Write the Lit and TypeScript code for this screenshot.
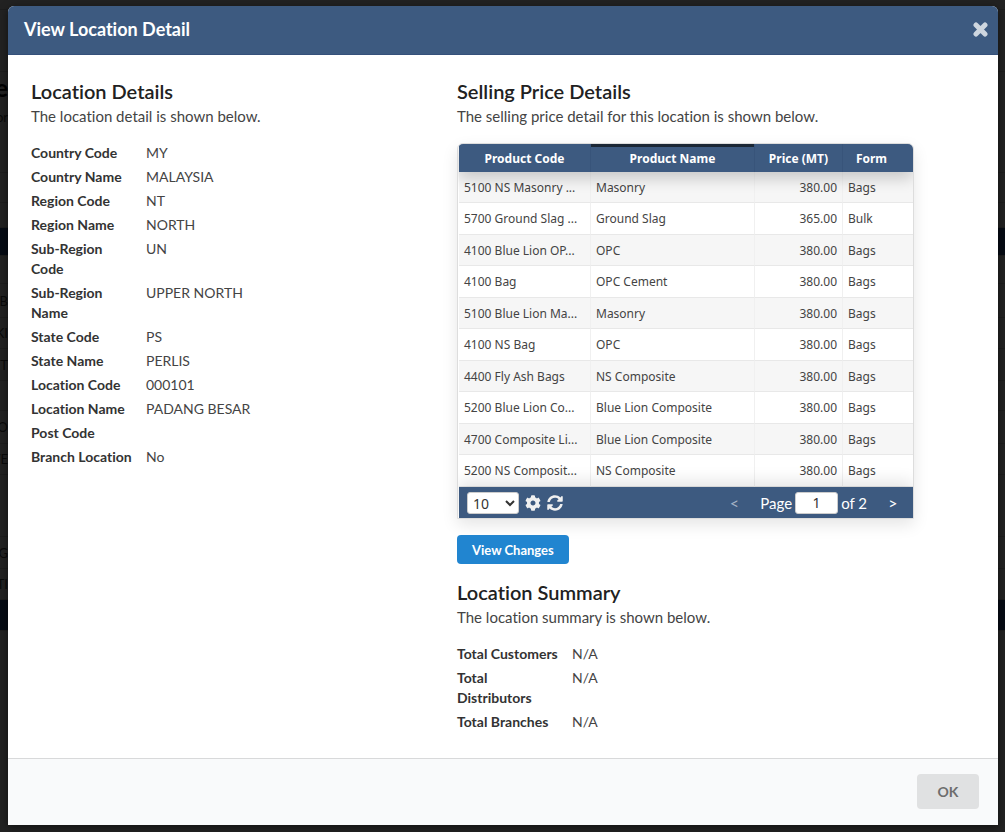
import { LitElement, html, css } from "lit";
import { customElement, state } from "lit/decorators.js";

type Pair = [label: string, value: string];
type Price = [code: string, name: string, price: string, form: string];
type BackdropRow = [kind: string, height: number, text: string];

const LOCATION: Pair[] = [
  ["Country Code", "MY"],
  ["Country Name", "MALAYSIA"],
  ["Region Code", "NT"],
  ["Region Name", "NORTH"],
  ["Sub-Region Code", "UN"],
  ["Sub-Region Name", "UPPER NORTH"],
  ["State Code", "PS"],
  ["State Name", "PERLIS"],
  ["Location Code", "000101"],
  ["Location Name", "PADANG BESAR"],
  ["Post Code", ""],
  ["Branch Location", "No"],
];

const SUMMARY: Pair[] = [
  ["Total Customers", "N/A"],
  ["Total Distributors", "N/A"],
  ["Total Branches", "N/A"],
];

const PRICES: Price[] = [
  ["5100 NS Masonry ...", "Masonry", "380.00", "Bags"],
  ["5700 Ground Slag ...", "Ground Slag", "365.00", "Bulk"],
  ["4100 Blue Lion OP...", "OPC", "380.00", "Bags"],
  ["4100 Bag", "OPC Cement", "380.00", "Bags"],
  ["5100 Blue Lion Ma...", "Masonry", "380.00", "Bags"],
  ["4100 NS Bag", "OPC", "380.00", "Bags"],
  ["4400 Fly Ash Bags", "NS Composite", "380.00", "Bags"],
  ["5200 Blue Lion Co...", "Blue Lion Composite", "380.00", "Bags"],
  ["4700 Composite Li...", "Blue Lion Composite", "380.00", "Bags"],
  ["5200 NS Composit...", "NS Composite", "380.00", "Bags"],
];

// Rows of the dimmed page that stays visible round the dialog.
const BACKDROP: BackdropRow[] = [
  ["plain", 10, ""],
  ["plain", 62, ""],
  ["title", 32, "e"],
  ["note", 26, "or"],
  ["plain", 43, ""],
  ["plain", 30, ""],
  ["plain", 25, ""],
  ["bar", 28, ""],
  ["plain", 28, ""],
  ["cell", 34, "B"],
  ["cell", 31, "KI"],
  ["cell", 32, "ET"],
  ["plain", 30, ""],
  ["cell", 33, "SO"],
  ["cell", 31, "YE"],
  ["plain", 62, ""],
  ["cell", 32, "G"],
  ["cell", 31, "TI"],
  ["bar", 31, ""],
];

@customElement("app-root")
export class AppRoot extends LitElement {
  static styles = css`
    :host {
      display: block;
      position: relative;
      min-height: 100vh;
      background: #222222;
      color: #212121;
      font-family: Lato, "Liberation Sans", sans-serif;
      font-size: 14px;
      font-variant-ligatures: none;
      overflow: hidden;
    }
    * {
      box-sizing: border-box;
    }
    .backdrop {
      position: absolute;
      inset: 0;
      overflow: hidden;
      font-size: 13px;
      color: #0a0a0a;
    }
    .band {
      display: flex;
      align-items: center;
      border-bottom: 1px solid #1d1d1d;
    }
    .band.title,
    .band.note {
      border-bottom-color: transparent;
    }
    .band.title {
      font-size: 24px;
      font-weight: 700;
      color: #000000;
    }
    .band.bar {
      background: #060b14;
    }
    .peek {
      display: flex;
      justify-content: flex-end;
      width: 8px;
    }
    .dialog {
      position: relative;
      display: flex;
      flex-direction: column;
      margin: 6px 7px 7px 8px;
      min-height: calc(100vh - 13px);
      background: #ffffff;
      border-radius: 6px 6px 0 0;
      box-shadow: 0 2px 8px rgba(0, 0, 0, 0.5);
    }
    .top {
      display: flex;
      align-items: center;
      justify-content: space-between;
      height: 49px;
      padding: 0 10px 2px 16px;
      background: #3d5a80;
      border-radius: 6px 6px 0 0;
      border-bottom: 1px solid #35507a;
      color: #ffffff;
    }
    .top h1 {
      margin: 0;
      font-size: 18px;
      font-weight: 700;
      line-height: 46px;
    }
    button {
      font-family: inherit;
      border: 0;
      cursor: pointer;
    }
    .icon {
      display: flex;
      padding: 0;
      background: none;
      color: #f0f0f0;
    }
    .icon.close {
      color: #ced6df;
    }
    .body {
      flex: 1;
      display: grid;
      grid-template-columns: 426fr 541fr;
      padding: 24px 0 24px 23px;
    }
    h2 {
      margin: 0;
      font-size: 20px;
      font-weight: 600;
      line-height: 25px;
    }
    .lead {
      margin: 0 0 15px;
      font-size: 15px;
      line-height: 24px;
      color: #444444;
    }
    .pairs {
      display: grid;
      grid-template-columns: 104px 1fr;
      gap: 4px 11px;
      margin: 0;
      line-height: 20px;
    }
    .pairs dt {
      font-weight: 700;
      color: #333333;
    }
    .pairs dd {
      margin: 0;
      color: #444444;
    }
    .grid {
      width: 457px;
      max-width: 100%;
      padding-left: 1px;
      border: 1px solid #dddddd;
      border-radius: 6px 6px 0 0;
      box-shadow: 0 6px 16px rgba(0, 0, 0, 0.1);
      overflow: hidden;
    }
    table {
      width: 100%;
      border-collapse: separate;
      border-spacing: 0;
      table-layout: fixed;
      font-family: "Noto Sans", "Open Sans", sans-serif;
      font-size: 12px;
      color: #444444;
    }
    .c-code {
      width: 132px;
    }
    .c-name {
      width: 164px;
    }
    .c-price {
      width: 88px;
    }
    thead {
      position: relative;
      box-shadow: 0 6px 16px rgba(0, 0, 0, 0.2);
    }
    th {
      height: 28px;
      padding: 0 5px;
      background: #3d5a80;
      border-right: 1px solid #38547a;
      color: #ffffff;
      font-weight: 700;
    }
    th.sorted {
      box-shadow: inset 0 3px 0 #1b2735;
    }
    th:last-child {
      padding-right: 18px;
      text-align: center;
    }
    th:last-child,
    td:last-child {
      border-right: 0;
    }
    td {
      height: 31px;
      padding: 0 5px;
      border-right: 1px solid #f0f0f0;
      border-bottom: 1px solid #e8e8e8;
      white-space: nowrap;
      overflow: hidden;
      text-overflow: clip;
    }
    tbody tr:nth-child(even) td {
      height: 32px;
    }
    tbody tr:nth-child(odd) td {
      background: #f6f6f6;
    }
    .num {
      text-align: right;
    }
    .pager {
      position: relative;
      display: flex;
      align-items: center;
      gap: 6px;
      height: 31px;
      padding: 0 14px 0 8px;
      background: #3d5a80;
      color: #ffffff;
      font-size: 15px;
      box-shadow: 0 -6px 16px rgba(0, 0, 0, 0.1);
    }
    .pager select,
    .pager input {
      height: 22px;
      border: 1px solid #cccccc;
      border-radius: 3px;
      background: #ffffff;
      color: #333333;
      font-family: "Noto Sans", "Open Sans", sans-serif;
      font-size: 14px;
    }
    .pager select {
      width: 52px;
      padding: 0 0 0 1px;
    }
    .pager input {
      width: 43px;
      margin: 0 3px;
      padding: 0;
      text-align: center;
    }
    .paging {
      display: flex;
      align-items: center;
      margin-left: auto;
    }
    .step {
      padding: 0;
      width: 12px;
      background: none;
      color: #ffffff;
      font-size: 16px;
    }
    .step:disabled {
      color: #a5b3c6;
    }
    .paging label {
      display: flex;
      align-items: center;
      margin: 0 20px;
    }
    .primary {
      display: block;
      margin: 16px 0;
      height: 29px;
      padding: 0 15px;
      border-radius: 4px;
      background: #2185d0;
      color: #ffffff;
      font-size: 13px;
      font-weight: 700;
    }
    .actions {
      display: flex;
      justify-content: flex-end;
      padding: 15px 19px 16px;
      background: #f9fafb;
      border-top: 1px solid #d8d9da;
    }
    .ok {
      height: 35px;
      width: 62px;
      border-radius: 4px;
      background: #e0e1e2;
      color: #6d6d6d;
      font-size: 14px;
      font-weight: 700;
    }
  `;

  @state() private page = 1;

  private pairs(items: Pair[]) {
    return html`<dl class="pairs">
      ${items.map(([label, value]) => html`<dt>${label}</dt><dd>${value}</dd>`)}
    </dl>`;
  }

  render() {
    return html`
      <div class="backdrop" aria-hidden="true">
        ${BACKDROP.map(
          ([kind, height, text]) =>
            html`<div class="band ${kind}" style="height:${height}px"><span class="peek">${text}</span></div>`
        )}
      </div>
      <section class="dialog" role="dialog" aria-labelledby="title">
        <header class="top">
          <h1 id="title">View Location Detail</h1>
          <button class="icon close" aria-label="Close">
            <svg width="15" height="15" viewBox="0 0 15 15">
              <path d="M3 3 12 12M12 3 3 12" stroke="currentColor" stroke-width="5" stroke-linecap="round" />
            </svg>
          </button>
        </header>
        <div class="body">
          <div>
            <h2>Location Details</h2>
            <p class="lead">The location detail is shown below.</p>
            ${this.pairs(LOCATION)}
          </div>
          <div>
            <h2>Selling Price Details</h2>
            <p class="lead">The selling price detail for this location is shown below.</p>
            <div class="grid">
              <table>
                <colgroup>
                  <col class="c-code" /><col class="c-name" /><col class="c-price" /><col />
                </colgroup>
                <thead>
                  <tr>
                    <th>Product Code</th>
                    <th class="sorted">Product Name</th>
                    <th>Price (MT)</th>
                    <th>Form</th>
                  </tr>
                </thead>
                <tbody>
                  ${PRICES.map(
                    ([code, name, price, form]) => html`<tr>
                      <td>${code}</td><td>${name}</td><td class="num">${price}</td><td>${form}</td>
                    </tr>`
                  )}
                </tbody>
              </table>
              <div class="pager">
                <select aria-label="Rows per page"><option>10</option><option>20</option><option>50</option></select>
                <button class="icon" aria-label="Settings">
                  <svg width="16" height="16" viewBox="0 0 512 512" fill="currentColor">
                    <path d="M487.400 315.700l-42.600-24.600c4.300-23.200 4.300-47 0-70.200l42.600-24.600c4.900-2.800 7.100-8.600 5.500-14-11.100-35.600-30-67.800-54.700-94.600-3.800-4.100-10-5.100-14.800-2.300L380.800 110c-17.900-15.400-38.500-27.300-60.800-35.100V25.800c0-5.600-3.900-10.500-9.400-11.700-36.700-8.200-74.300-7.800-109.200 0-5.500 1.200-9.400 6.100-9.400 11.700V75c-22.200 7.900-42.800 19.800-60.800 35.100L88.700 85.500c-4.900-2.800-11-1.900-14.800 2.300-24.700 26.700-43.600 58.900-54.700 94.600-1.700 5.400.6 11.200 5.500 14L67.300 221c-4.300 23.200-4.300 47 0 70.200l-42.600 24.600c-4.900 2.800-7.100 8.600-5.500 14 11.100 35.600 30 67.800 54.700 94.600 3.800 4.100 10 5.100 14.800 2.300l42.600-24.600c17.900 15.400 38.500 27.300 60.800 35.100v49.200c0 5.600 3.900 10.500 9.400 11.700 36.700 8.200 74.300 7.800 109.200 0 5.500-1.200 9.400-6.100 9.400-11.700v-49.200c22.200-7.900 42.800-19.800 60.800-35.100l42.600 24.600c4.900 2.800 11 1.900 14.800-2.300 24.700-26.700 43.600-58.900 54.700-94.600 1.500-5.500-.7-11.300-5.600-14.100zM256 336c-44.100 0-80-35.900-80-80s35.900-80 80-80 80 35.900 80 80-35.900 80-80 80z" />
                  </svg>
                </button>
                <button class="icon" aria-label="Refresh">
                  <svg width="16" height="16" viewBox="0 0 512 512" fill="currentColor">
                    <path d="M370.720 133.280C339.458 104.008 298.888 87.962 255.848 88c-77.458.068-144.328 53.178-162.791 126.850-1.344 5.363-6.122 9.150-11.651 9.150H24.103c-7.498 0-13.194-6.807-11.807-14.176C33.933 94.924 134.813 8 256 8c66.448 0 126.791 26.136 171.315 68.685L463.030 40.970C478.149 25.851 504 36.559 504 57.941V192c0 13.255-10.745 24-24 24H345.941c-21.382 0-32.090-25.851-16.971-40.971l41.750-41.749zM32 296h134.059c21.382 0 32.090 25.851 16.971 40.971l-41.750 41.750c31.262 29.273 71.835 45.319 114.876 45.280 77.418-.07 144.315-53.144 162.787-126.849 1.344-5.363 6.122-9.150 11.651-9.150h57.304c7.498 0 13.194 6.807 11.807 14.176C478.067 417.076 377.187 504 256 504c-66.448 0-126.791-26.136-171.315-68.685L48.970 471.030C33.851 486.149 8 475.441 8 454.059V320c0-13.255 10.745-24 24-24z" />
                  </svg>
                </button>
                <div class="paging">
                  <button class="step" aria-label="Previous page" ?disabled=${this.page === 1} @click=${() => (this.page = 1)}>&lt;</button>
                  <label>Page<input type="text" .value=${String(this.page)} />of 2</label>
                  <button class="step" aria-label="Next page" ?disabled=${this.page === 2} @click=${() => (this.page = 2)}>&gt;</button>
                </div>
              </div>
            </div>
            <button class="primary">View Changes</button>
            <h2>Location Summary</h2>
            <p class="lead">The location summary is shown below.</p>
            ${this.pairs(SUMMARY)}
          </div>
        </div>
        <footer class="actions"><button class="ok">OK</button></footer>
      </section>
    `;
  }
}
